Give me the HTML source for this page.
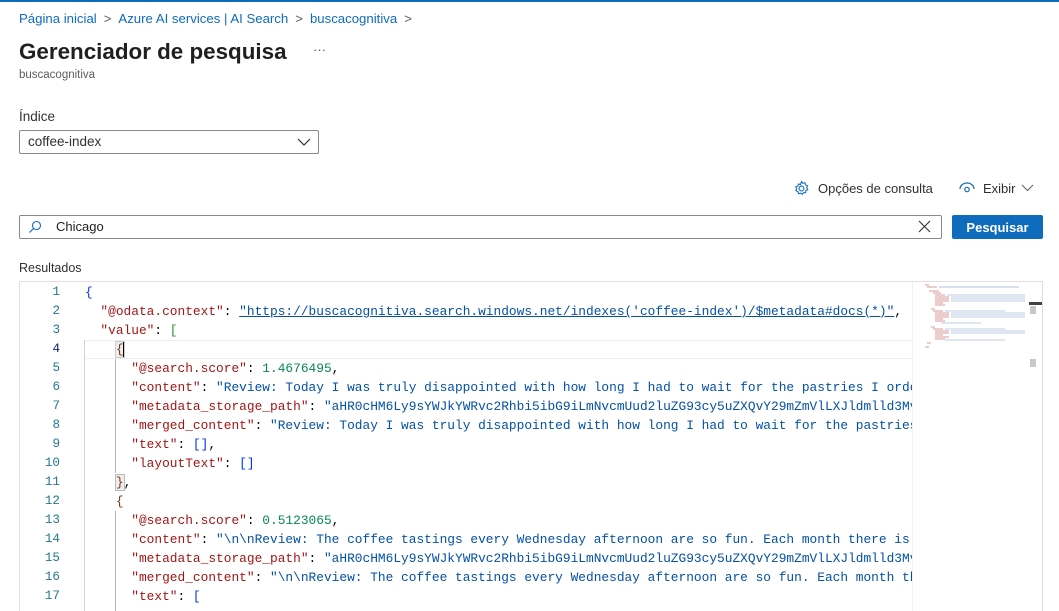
<!DOCTYPE html>
<html><head><meta charset="utf-8"><style>
*{margin:0;padding:0;box-sizing:border-box}
body{width:1059px;height:608px;overflow:hidden;background:#fff;font-family:"Segoe UI","Liberation Sans",sans-serif;color:#323130;position:relative}
.a{position:absolute}
.bc{top:11px;left:19px;font-size:13.2px;color:#0f6cbd;white-space:nowrap}
.bc span.s{color:#605e5c;margin:0 7px}
h1{position:absolute;top:39px;left:19px;font-size:22.4px;font-weight:600;color:#201f1e}
.code{position:absolute;left:19px;top:281px;width:1024px;height:330px;border:1px solid #e1dfdd;border-bottom:none;overflow:hidden;font-family:"Liberation Mono",monospace;font-size:12.85px}
.ln{position:absolute;left:0;width:40px;text-align:right;color:#237893;font-size:12.6px}
.l{position:absolute;left:65px;white-space:pre;color:#000}
.k{color:#a31515}.s{color:#0451a5}.n{color:#098658}.b1{color:#0431fa}.b2{color:#319331}.b3{color:#7b3814}
</style></head><body>
<div class="a" style="top:0;left:0;width:1059px;height:2px;background:#0f6cbd"></div>
<div class="a bc">Página inicial<span class="s">&gt;</span>Azure AI services | AI Search<span class="s">&gt;</span>buscacognitiva<span class="s">&gt;</span></div>
<h1>Gerenciador de pesquisa</h1>
<div class="a" style="top:42px;left:313px;font-size:13px;color:#605e5c">···</div>
<div class="a" style="top:69px;left:19px;font-size:11.5px;color:#605e5c">buscacognitiva</div>
<div class="a" style="top:109px;left:19px;font-size:13.5px">Índice</div>
<div class="a" style="top:130px;left:19px;width:300px;height:24px;border:1px solid #8a8886;border-radius:2px;font-size:13.5px;padding:3px 0 0 8px">coffee-index
<svg class="a" style="right:7px;top:6px" width="14" height="10" viewBox="0 0 14 10"><path d="M1 2l6 6 6-6" stroke="#323130" fill="none" stroke-width="1.2"/></svg></div>
<svg class="a" style="left:793px;top:180px" width="17" height="17" viewBox="0 0 16 16"><circle cx="8" cy="8" r="2.3" fill="none" stroke="#0f6cbd"/><path d="M8 1.5l1.3 1.6 2-.5.5 2 1.9.8-.8 1.9 1 1.7-1.8 1-.2 2-2-.1-1.2 1.6-1.6-1.2-1.9.6-.6-1.9-1.9-.9.8-1.8-.9-1.8 1.9-.8.6-1.9 2 .5z" fill="none" stroke="#0f6cbd" stroke-width="1"/></svg>
<div class="a" style="left:818px;top:181px;font-size:13px">Opções de consulta</div>
<svg class="a" style="left:958px;top:181px" width="18" height="14" viewBox="0 0 18 14"><path d="M2 8a7 6 0 0 1 14 0" fill="none" stroke="#0f6cbd" stroke-width="1.2"/><circle cx="9" cy="8.5" r="2.2" fill="none" stroke="#0f6cbd" stroke-width="1.2"/></svg>
<div class="a" style="left:983px;top:181px;font-size:13px">Exibir</div>
<svg class="a" style="left:1021px;top:184px" width="13" height="8" viewBox="0 0 13 8"><path d="M1 1l5.5 5.5L12 1" stroke="#605e5c" fill="none"/></svg>
<div class="a" style="left:19px;top:215px;width:923px;height:24px;border:1px solid #8a8886;border-radius:2px"></div>
<svg class="a" style="left:28px;top:220px" width="14" height="14" viewBox="0 0 14 14"><circle cx="8.5" cy="5.5" r="4" fill="none" stroke="#0f6cbd" stroke-width="1.1"/><path d="M5.5 8.5L1.5 12.5" stroke="#0f6cbd" stroke-width="1.2"/></svg>
<div class="a" style="left:56px;top:219px;font-size:13px;color:#201f1e">Chicago</div>
<svg class="a" style="left:918px;top:220px" width="13" height="13" viewBox="0 0 13 13"><path d="M1 1l11 11M12 1L1 12" stroke="#323130" stroke-width="1.1"/></svg>
<div class="a" style="left:952px;top:215px;width:91px;height:24px;background:#0f6cbd;border-radius:2px;color:#fff;font-size:13px;font-weight:600;text-align:center;line-height:25px">Pesquisar</div>
<div class="a" style="left:19px;top:261px;font-size:12.5px">Resultados</div>
<div class="code">
<div class="a" style="left:65px;top:58px;width:830px;height:19px;border:1px solid #eeeeee;border-left:none;border-right:none"></div>
<div class="a" style="left:95px;top:77px;width:1px;height:114px;background:#b4b4b4"></div>
<div class="a" style="left:95px;top:229px;width:1px;height:110px;background:#b4b4b4"></div>
<div class="a" style="left:64px;top:58px;width:1px;height:290px;background:#d3d3d3"></div>
<div id="lines"></div>
<div class="a" style="left:892px;top:0;width:117px;height:330px;background:#fff;border-left:1px solid #f0f0f0"></div>
<svg class="a" style="left:895px;top:0" width="112" height="80" viewBox="0 0 112 80">
<g stroke-width="1" opacity=".8">
<path d="M10 3h4M12 5h10" stroke="#d08080"/><path d="M24 5h80" stroke="#a0b4d8"/>
<path d="M14 9h10M18 11h8M20 13h10M20 15h14M20 17h14M20 19h14M20 21h8M20 23h10" stroke="#d08080"/>
<path d="M32 13h78M36 15h74M36 17h74M36 19h74" stroke="#b0c2e0"/>
<path d="M16 27h4M18 29h10M20 31h14M20 33h14M20 35h14M20 37h8M20 39h10" stroke="#d08080"/>
<path d="M30 29h60M36 31h74M36 33h74M36 35h74M26 41h40" stroke="#b0c2e0"/>
<path d="M16 45h4M18 47h10M20 49h14M20 51h14M20 53h8M20 55h14M20 57h10" stroke="#d08080"/>
<path d="M30 47h60M36 49h74M36 51h74M30 58h60" stroke="#b0c2e0"/>
<path d="M12 61h4M10 65h4" stroke="#d08080"/>
</g></svg>
<div class="a" style="left:1009px;top:20px;width:13px;height:3px;background:#424242"></div>
<div class="a" style="left:1010px;top:24px;width:6px;height:8px;background:#c8c8c8"></div>
<div class="a" style="left:1010px;top:77px;width:6px;height:8px;background:#c8c8c8"></div>
</div>
<script>
const L=[
'<span class="b1">{</span>',
'  <span class="k">"@odata.context"</span>: <span class="s" style="text-decoration:underline">"https://buscacognitiva.search.windows.net/indexes(\'coffee-index\')/$metadata#docs(*)"</span>,',
'  <span class="k">"value"</span>: <span class="b2">[</span>',
'    <span class="b3" style="background:#eee;outline:1px solid #ccc">{</span><span style="border-left:2px solid #000;margin-left:-1px"></span>',
'      <span class="k">"@search.score"</span>: <span class="n">1.4676495</span>,',
'      <span class="k">"content"</span>: <span class="s">"Review: Today I was truly disappointed with how long I had to wait for the pastries I ordered</span>',
'      <span class="k">"metadata_storage_path"</span>: <span class="s">"aHR0cHM6Ly9sYWJkYWRvc2Rhbi5ibG9iLmNvcmUud2luZG93cy5uZXQvY29mZmVlLXJldmlld3MvcmV2aWV3</span>',
'      <span class="k">"merged_content"</span>: <span class="s">"Review: Today I was truly disappointed with how long I had to wait for the pastries I</span>',
'      <span class="k">"text"</span>: <span class="b1">[]</span>,',
'      <span class="k">"layoutText"</span>: <span class="b1">[]</span>',
'    <span class="b3" style="background:#eee;outline:1px solid #bbb">}</span>,',
'    <span class="b3">{</span>',
'      <span class="k">"@search.score"</span>: <span class="n">0.5123065</span>,',
'      <span class="k">"content"</span>: <span class="s">"\\n\\nReview: The coffee tastings every Wednesday afternoon are so fun. Each month there is a</span>',
'      <span class="k">"metadata_storage_path"</span>: <span class="s">"aHR0cHM6Ly9sYWJkYWRvc2Rhbi5ibG9iLmNvcmUud2luZG93cy5uZXQvY29mZmVlLXJldmlld3MvcmV2aWV3</span>',
'      <span class="k">"merged_content"</span>: <span class="s">"\\n\\nReview: The coffee tastings every Wednesday afternoon are so fun. Each month there</span>',
'      <span class="k">"text"</span>: <span class="b1">[</span>'];
let h='';L.forEach((t,i)=>{const y=3+i*19;h+=`<div class="ln" style="top:${y}px;color:${i==3?'#0b216f':'#237893'}">${i+1}</div><div class="l" style="top:${y}px">${t}</div>`});
document.getElementById('lines').innerHTML=h;
</script>
</body></html>
